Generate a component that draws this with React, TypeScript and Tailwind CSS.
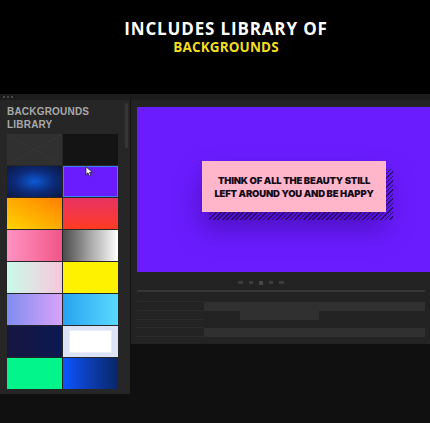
import React from "react";

type Swatch = { cls: string; extra?: React.ReactNode };

const SWATCHES: Swatch[] = [
  {
    cls: "bg-[#303030]",
    extra: (
      <svg className="absolute inset-0 h-full w-full" viewBox="0 0 55 31" preserveAspectRatio="none">
        <line x1="0" y1="0" x2="55" y2="31" stroke="#3a3a3a" strokeWidth="0.6" />
        <line x1="55" y1="0" x2="0" y2="31" stroke="#3a3a3a" strokeWidth="0.6" />
      </svg>
    ),
  },
  { cls: "bg-[#141414]" },
  { cls: "bg-radial from-[#0b5ad6] via-[#0c2b7a] to-[#0b1640]" },
  {
    cls: "bg-[#6b1cff] ring-1 ring-inset ring-[#3d7fff]",
    extra: (
      <svg className="absolute left-[22px] top-[0px] h-[11px] w-[9px]" viewBox="0 0 9 11">
        <path d="M1 0.8 L1 8.6 L3 6.8 L4.4 10 L5.8 9.4 L4.5 6.3 L7.4 6.3 Z" fill="#ffffff" stroke="#111" strokeWidth="0.7" strokeLinejoin="round" />
      </svg>
    ),
  },
  { cls: "bg-linear-to-tr from-[#ffd400] to-[#ff7e00]" },
  { cls: "bg-linear-to-b from-[#e8325f] to-[#ff3b1c]" },
  { cls: "bg-linear-to-r from-[#ff92c2] to-[#ef5588]" },
  { cls: "bg-linear-to-r from-[#4c4c4c] via-[#a9a9a9] to-[#ffffff]" },
  { cls: "bg-linear-to-r from-[#c6fbe9] to-[#f6c6dc]" },
  { cls: "bg-[#fff200]" },
  { cls: "bg-linear-to-r from-[#7f8cef] to-[#d8a2fa]" },
  { cls: "bg-linear-to-r from-[#26a3ee] to-[#5ad9ff]" },
  { cls: "bg-linear-to-r from-[#171540] to-[#0a1a52]" },
  {
    cls: "bg-[#dce3f6] flex items-center justify-center",
    extra: <div className="h-[23px] w-[43px] border border-[#e9edf9] bg-white" />,
  },
  { cls: "bg-[#02f58b]" },
  { cls: "bg-linear-to-r from-[#0a55ff] to-[#0a2568]" },
];

export default function App() {
  return (
    <div className="flex h-[423px] w-[430px] flex-col overflow-hidden bg-black font-['Open_Sans',sans-serif]">
      {/* heading */}
      <div className="flex h-[94px] flex-col items-center pl-[22px] pt-[20px]">
        <h1 className="text-[17px] font-bold leading-[18px] tracking-[0.05em] text-white">
          INCLUDES LIBRARY OF
        </h1>
        <p className="mt-[2px] text-[13.5px] font-bold leading-[14px] tracking-[0.01em] text-[#f2dd1f]">
          BACKGROUNDS
        </p>
      </div>

      {/* app window */}
      <div className="flex flex-1 flex-col bg-[#101010]">
        <div className="flex h-[6px] items-center gap-[2px] bg-[#1d1d1d] pl-[3px]">
          <span className="h-[2px] w-[2px] rounded-full bg-[#555]" />
          <span className="h-[2px] w-[2px] rounded-full bg-[#555]" />
          <span className="h-[2px] w-[2px] rounded-full bg-[#555]" />
        </div>

        <div className="flex flex-1 items-start">
          {/* library panel */}
          <div className="relative flex h-[294px] w-[130px] flex-col bg-[#262626] pl-[7px] pt-[5px]">
            <div className="font-['Liberation_Sans',sans-serif] text-[10px] font-bold leading-[13px] tracking-[0.02em] text-[#a9a9a9]">
              BACKGROUNDS
              <br />
              LIBRARY
            </div>
            <div className="mt-[3px] grid w-[111px] grid-cols-2 gap-[1px]">
              {SWATCHES.map((s, i) => (
                <div key={i} className={`relative h-[31px] overflow-hidden ${s.cls}`}>
                  {s.extra}
                </div>
              ))}
            </div>
            <div className="absolute left-[125px] top-[3px] h-[45px] w-[3px] rounded-full bg-[#363636]" />
          </div>

          {/* preview + timeline */}
          <div className="ml-[1px] flex flex-1 flex-col">
            <div className="flex flex-col bg-[#232323] pl-[6px] pt-[7px]">
              <div className="relative h-[165px] bg-[#6b1cff] pl-[65px] pt-[54px]">
                <div className="relative w-[184px]">
                  <div className="absolute left-[7px] top-[8px] h-[51px] w-[184px] bg-[repeating-linear-gradient(135deg,#2c0c6e_0px,#2c0c6e_1.2px,transparent_1.2px,transparent_3.2px)]" />
                  <div className="relative flex h-[51px] w-[184px] flex-col items-center justify-center bg-[#ffb6cb] font-['Inter',sans-serif] text-[9.5px] font-black leading-[13px] tracking-[-0.02em] text-[#140c18] shadow-[0_16px_28px_rgba(38,0,110,0.45)]">
                    <span>THINK OF ALL THE BEAUTY STILL</span>
                    <span>LEFT AROUND YOU AND BE HAPPY</span>
                  </div>
                </div>
              </div>

              {/* timeline */}
              <div className="flex h-[72px] flex-col pr-[5px]">
                <div className="flex h-[17px] items-center justify-center gap-[6px] pr-[40px] pt-[4px]">
                  <span className="h-[3px] w-[5px] bg-[#3c3c3c]" />
                  <span className="h-[3px] w-[4px] bg-[#3c3c3c]" />
                  <span className="h-[4px] w-[4px] bg-[#464646]" />
                  <span className="h-[3px] w-[4px] bg-[#3c3c3c]" />
                  <span className="h-[3px] w-[5px] bg-[#3c3c3c]" />
                </div>
                <div className="mt-[1px] h-[2px] bg-[#363636]" />
                <div className="mt-[2px] flex flex-col">
                  <div className="flex h-[8px]">
                    <div className="w-[67px] border-b border-[#2c2c2c]" />
                  </div>
                  <div className="flex h-[9px]">
                    <div className="w-[67px] border-b border-[#2c2c2c]" />
                    <div className="flex-1 bg-[#303030]" />
                  </div>
                  <div className="flex h-[9px]">
                    <div className="w-[67px] border-b border-[#2c2c2c]" />
                    <div className="ml-[36px] w-[79px] bg-[#303030]" />
                  </div>
                  <div className="flex h-[8px]">
                    <div className="w-[67px] border-b border-[#2c2c2c]" />
                  </div>
                  <div className="flex h-[9px]">
                    <div className="w-[67px] border-b border-[#2c2c2c]" />
                    <div className="flex-1 bg-[#303030]" />
                  </div>
                </div>
              </div>
            </div>
          </div>
        </div>
      </div>
    </div>
  );
}
